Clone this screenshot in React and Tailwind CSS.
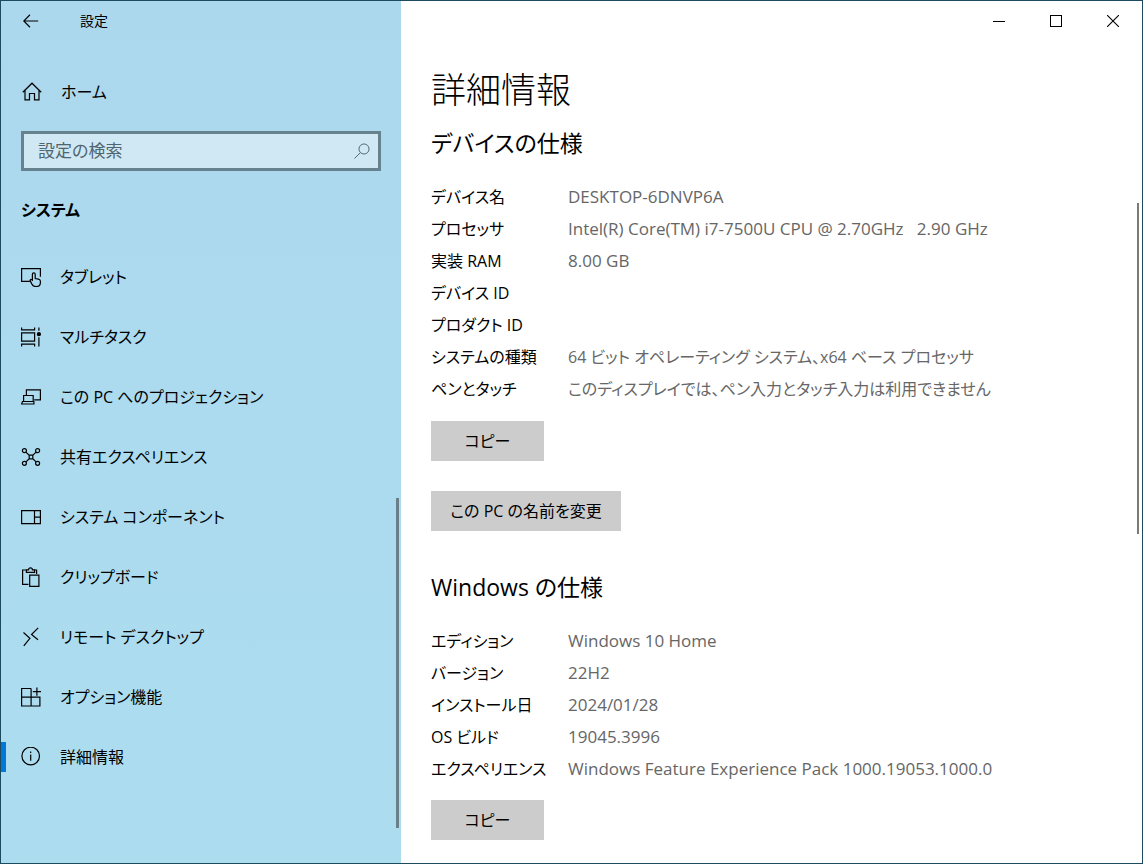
const Icon = ({ children, className = "size-5" }) => (
  <svg
    viewBox="0 0 20 20"
    className={`${className} shrink-0`}
    fill="none"
    stroke="currentColor"
    strokeWidth="1.2"
    aria-hidden="true"
  >
    {children}
  </svg>
);

const HomeIcon = () => (
  <Icon>
    <path d="M.8 10.3 10 1.2l9.200 9.100M3 8.300V17.900h4.500V11.500h5v6.400H17V8.300" />
  </Icon>
);

const navItems = [
  {
    label: "タブレット",
    icon: (
      <>
        <path d="M8.800 14.400H.6V1.600h18.800v8.200" />
        <path d="M11.400 13.200V7.300a1.400 1.400 0 0 1 2.800 0v4.200l3.300.6c1.300.3 1.900 1 1.900 2.200v1.200c0 2.400-1.800 4.100-4.300 4.100-2.100 0-3.300-.9-4.200-2.500l-1.700-3.200c-.5-1 .7-1.900 1.500-1.200z" />
      </>
    ),
  },
  {
    label: "マルチタスク",
    icon: (
      <>
        <path d="M.6 5.900h13v8.200H.6zM.6.500v2.300h13V.500M.6 19.500v-2.300h13v2.300M17.900.500v3.200M17.900 10.300v9.200" />
        <circle cx="17.900" cy="7.200" r="1.500" fill="currentColor" />
      </>
    ),
  },
  {
    label: "この PC へのプロジェクション",
    icon: (
      <>
        <path d="M5.400 8.500V2.800h14v10h-6.200" />
        <path d="M2.600 8.500h9.600v6H2.600zM1.500 14.500h11.400v2.500H.6z" />
      </>
    ),
  },
  {
    label: "共有エクスペリエンス",
    icon: (
      <>
        <circle cx="3.400" cy="3.700" r="2" />
        <circle cx="16.600" cy="3.700" r="2" />
        <circle cx="3.400" cy="16.300" r="2" />
        <circle cx="16.600" cy="16.300" r="2" />
        <path d="M8.200 8.200h3.600v3.600H8.200zM4.900 5.100l3.300 3.100M15.100 5.100l-3.300 3.100M4.900 14.900l3.300-3.100M15.100 14.900l-3.300-3.100" />
      </>
    ),
  },
  {
    label: "システム コンポーネント",
    icon: <path d="M.6 3.600h18.800v13H.6zM13.500 3.600v13M13.500 10.100h5.900" />,
  },
  {
    label: "クリップボード",
    icon: (
      <>
        <path d="M7.500 17.400H1.600V3h3.800M13.400 3h2.200v4" />
        <path d="M5.400 5.300V2.800h2.200a1.900 1.900 0 0 1 3.800 0h2.200v2.500zM8.700 8.200h9.200v11.200H8.700z" />
      </>
    ),
  },
  {
    label: "リモート デスクトップ",
    icon: <path d="M2.500 5.500 8.900 11.400 2.800 18.900M17.200.9 10.500 7.500l6.500 5.300" />,
  },
  {
    label: "オプション機能",
    icon: (
      <path d="M10.100 1.500H.6v17.500h18.300V10.200H.6M10.100 1.500V19M15.900.5v8.200M11.800 4.600h8.200" />
    ),
  },
  {
    label: "詳細情報",
    active: true,
    icon: (
      <>
        <circle cx="9.700" cy="9" r="8.800" />
        <path d="M9.700 7.600v6.200M9.700 4.500v1.500" />
      </>
    ),
  },
];

const deviceSpecs = [
  ["デバイス名", "DESKTOP-6DNVP6A"],
  ["プロセッサ", "Intel(R) Core(TM) i7-7500U CPU @ 2.70GHz\u00a0\u00a0 2.90 GHz"],
  ["実装 RAM", "8.00 GB"],
  ["デバイス ID", ""],
  ["プロダクト ID", ""],
  ["システムの種類", "64 ビット オペレーティング システム、x64 ベース プロセッサ", "ja"],
  ["ペンとタッチ", "このディスプレイでは、ペン入力とタッチ入力は利用できません", "ja"],
];

const windowsSpecs = [
  ["エディション", "Windows 10 Home"],
  ["バージョン", "22H2"],
  ["インストール日", "2024/01/28"],
  ["OS ビルド", "19045.3996"],
  ["エクスペリエンス", "Windows Feature Experience Pack 1000.19053.1000.0"],
];

const SpecTable = ({ rows }) => (
  <table className="w-full text-left">
    <tbody>
      {rows.map(([label, value, lang]) => (
        <tr key={label} className="h-8">
          <th scope="row" className="w-[137px] p-0 text-base font-normal whitespace-nowrap">
            {label}
          </th>
          <td className={`p-0 text-[#666666] ${lang === "ja" ? "text-base" : "text-[17px]"}`}>
            {value}
          </td>
        </tr>
      ))}
    </tbody>
  </table>
);

const GrayButton = ({ children, className }) => (
  <button type="button" className={`block h-10 bg-[#cccccc] text-center text-base ${className}`}>
    {children}
  </button>
);

const Sidebar = () => (
  <aside className="relative w-[400px] shrink-0 bg-linear-to-b from-[#acd8ee] to-[#acddef]">
    <header className="flex h-10 items-center">
      <button type="button" aria-label="戻る" className="flex h-10 w-[60px] items-center justify-center">
        <Icon className="size-4">
          <path d="M19 10H1.200M8.700 2.200 1 10l7.700 7.800" strokeWidth="1.4" />
        </Icon>
      </button>
      <span className="ml-[19px] text-sm">設定</span>
    </header>

    <a href="#home" className="mt-[21px] flex h-[60px] items-center gap-[19px] pl-[21px] text-base">
      <HomeIcon />
      ホーム
    </a>

    <label className="mx-5 mt-[9px] flex h-10 items-center border-3 border-[#66828f] bg-[#cfe8f4] pr-2 pl-[14px] text-[#4f6570]">
      <input
        type="search"
        aria-label="設定の検索"
        placeholder="設定の検索"
        className="min-w-0 flex-1 bg-transparent outline-none placeholder:text-[#4f6570]"
      />
      <Icon className="size-4">
        <circle cx="12.500" cy="7.500" r="6.300" />
        <path d="M8 12 .6 19.400" />
      </Icon>
    </label>

    <h2 className="mt-[19px] pl-5 text-base leading-10 font-bold">システム</h2>

    <nav className="mt-[17px]">
      {navItems.map((item) => (
        <a
          key={item.label}
          href="#settings"
          aria-current={item.active ? "page" : undefined}
          className="relative flex h-[60px] items-center gap-[19px] pl-5 text-base"
        >
          {item.active && <span className="absolute top-[15px] left-0 h-[30px] w-[5px] bg-[#0078d7]" />}
          <Icon>{item.icon}</Icon>
          {item.label}
        </a>
      ))}
    </nav>

    <div className="absolute right-[2px] bottom-[35px] h-[330px] w-[3px] bg-[#6b7f8a]" />
  </aside>
);

const TitleButtons = () => (
  <div className="flex h-10 justify-end pr-px text-black">
    <button type="button" aria-label="最小化" className="flex w-[57px] items-center justify-center">
      <span className="h-px w-3 bg-black" />
    </button>
    <button type="button" aria-label="最大化" className="flex w-[57px] items-center justify-center">
      <span className="size-3 border border-black" />
    </button>
    <button type="button" aria-label="閉じる" className="flex w-[57px] items-center justify-center">
      <svg viewBox="0 0 12 12" className="size-3" stroke="currentColor" strokeWidth="1.1">
        <path d="M0 0 12 12M12 0 0 12" />
      </svg>
    </button>
  </div>
);

const App = () => {
  return (
    <div className="flex min-h-screen border border-[#1e4a5f] bg-white font-['Open_Sans','Noto_Sans_CJK_JP',sans-serif] text-[17px] leading-6 text-black [font-feature-settings:'palt']">
      <Sidebar />
      <div className="relative min-w-0 flex-1">
        <TitleButtons />
        <main className="pr-10 pl-[30px]">
          <h1 className="mt-6 text-[35px] leading-[50px] font-light">詳細情報</h1>

          <h2 className="mt-2 text-[23px] leading-10">デバイスの仕様</h2>
          <div className="mt-[18px]">
            <SpecTable rows={deviceSpecs} />
          </div>
          <GrayButton className="mt-4 w-[113px]">コピー</GrayButton>
          <GrayButton className="mt-[30px] w-[190px]">この PC の名前を変更</GrayButton>

          <h2 className="mt-9 text-[23px] leading-10">Windows の仕様</h2>
          <div className="mt-[18px]">
            <SpecTable rows={windowsSpecs} />
          </div>
          <GrayButton className="mt-[15px] w-[113px]">コピー</GrayButton>
        </main>
        <div className="absolute top-[202px] right-[3px] h-[331px] w-[2px] bg-[#7a7a76]" />
      </div>
    </div>
  );
};

export default App;
